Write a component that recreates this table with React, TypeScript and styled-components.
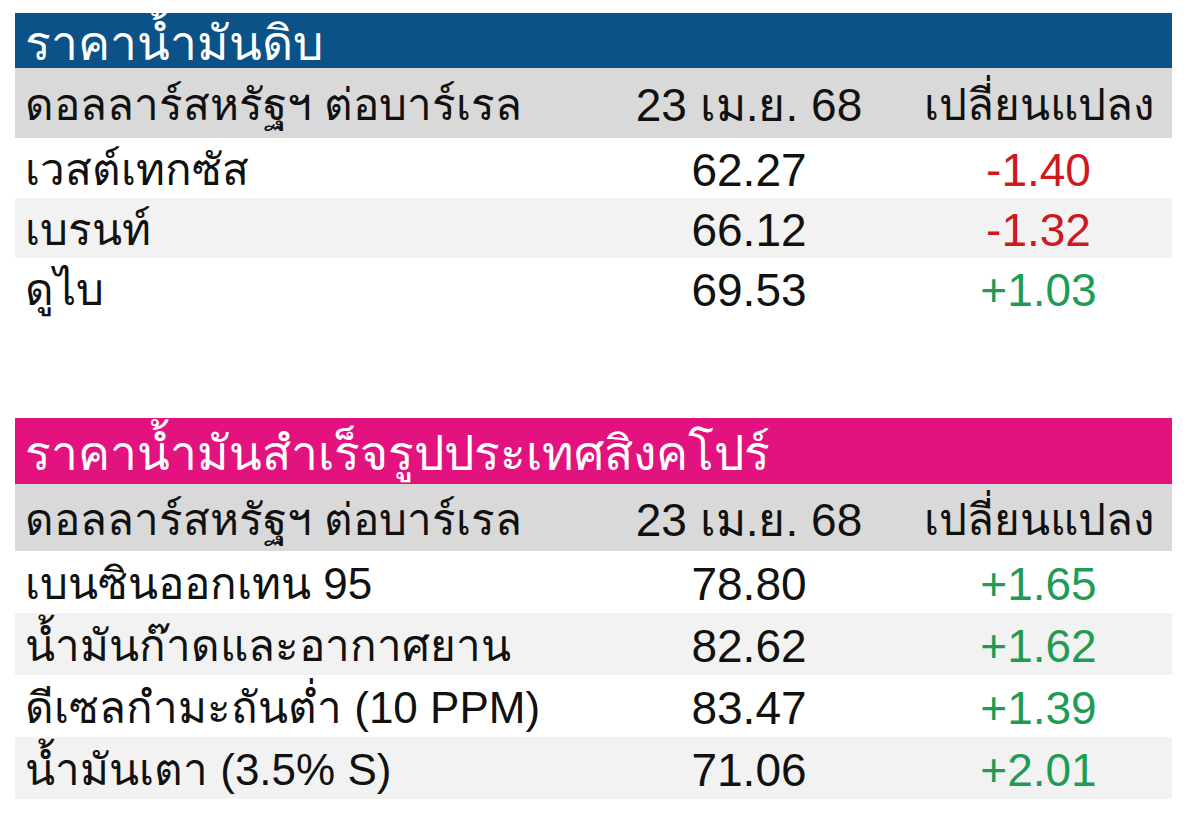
import styled, { createGlobalStyle } from "styled-components";

const GlobalStyle = createGlobalStyle`
  html, body {
    margin: 0;
    padding: 0;
    background: #ffffff;
  }
  body {
    font-family: "Liberation Sans", Tahoma, "Noto Sans", sans-serif;
  }
`;

type Row = { name: string; price: string; change: string };

const crude: Row[] = [
  { name: "เวสต์เทกซัส", price: "62.27", change: "-1.40" },
  { name: "เบรนท์", price: "66.12", change: "-1.32" },
  { name: "ดูไบ", price: "69.53", change: "+1.03" },
];

const refined: Row[] = [
  { name: "เบนซินออกเทน 95", price: "78.80", change: "+1.65" },
  { name: "น้ำมันก๊าดและอากาศยาน", price: "82.62", change: "+1.62" },
  { name: "ดีเซลกำมะถันต่ำ (10 PPM)", price: "83.47", change: "+1.39" },
  { name: "น้ำมันเตา (3.5% S)", price: "71.06", change: "+2.01" },
];

const PriceTable = ({
  title,
  accent,
  rows,
  titleHeight,
  headHeight,
  rowHeight,
}: {
  title: string;
  accent: string;
  rows: Row[];
  titleHeight: number;
  headHeight: number;
  rowHeight: number;
}) => (
  <Table>
    <Title $bg={accent} $h={titleHeight}>
      {title}
    </Title>
    <Line $bg="#d9d9d9" $h={headHeight}>
      <Label>ดอลลาร์สหรัฐฯ ต่อบาร์เรล</Label>
      <Cell>23 เม.ย. 68</Cell>
      <Cell $thai>เปลี่ยนแปลง</Cell>
    </Line>
    {rows.map((r, i) => (
      <Line key={r.name} $bg={i % 2 ? "#f2f2f2" : "#ffffff"} $h={rowHeight}>
        <Label>{r.name}</Label>
        <Cell>{r.price}</Cell>
        <Cell $color={r.change.startsWith("-") ? "#cc1a20" : "#1f9b55"}>
          {r.change}
        </Cell>
      </Line>
    ))}
  </Table>
);

export default function App() {
  return (
    <>
      <GlobalStyle />
      <Page>
        <PriceTable
          title="ราคาน้ำมันดิบ"
          accent="#0b5288"
          rows={crude}
          titleHeight={55}
          headHeight={70}
          rowHeight={60}
        />
        <PriceTable
          title="ราคาน้ำมันสำเร็จรูปประเทศสิงคโปร์"
          accent="#e2137e"
          rows={refined}
          titleHeight={66}
          headHeight={67}
          rowHeight={62}
        />
      </Page>
    </>
  );
}

const Page = styled.main`
  display: flex;
  flex-direction: column;
  gap: 100px;
  padding: 13px 28px 0 15px;
  width: 1157px;
`;

const Table = styled.section`
  display: flex;
  flex-direction: column;
`;

const Title = styled.h2<{ $bg: string; $h: number }>`
  margin: 0;
  box-sizing: border-box;
  height: ${({ $h }) => $h}px;
  display: flex;
  align-items: center;
  padding: 6px 0 0 10px;
  background: ${({ $bg }) => $bg};
  color: #ffffff;
  font-size: 48px;
  font-weight: normal;
  line-height: 1;
`;

const Line = styled.div<{ $bg: string; $h: number }>`
  display: grid;
  grid-template-columns: 578px 312px 267px;
  align-items: center;
  height: ${({ $h }) => $h}px;
  background: ${({ $bg }) => $bg};
  color: #111111;
  line-height: 1;
`;

const Label = styled.div`
  padding-left: 10px;
  padding-top: 4px;
  font-size: 44px;
  white-space: nowrap;
`;

const Cell = styled.div<{ $color?: string; $thai?: boolean }>`
  text-align: center;
  padding-top: 4px;
  font-size: ${({ $thai }) => ($thai ? 44 : 46)}px;
  white-space: nowrap;
  color: ${({ $color }) => $color ?? "#111111"};
`;
